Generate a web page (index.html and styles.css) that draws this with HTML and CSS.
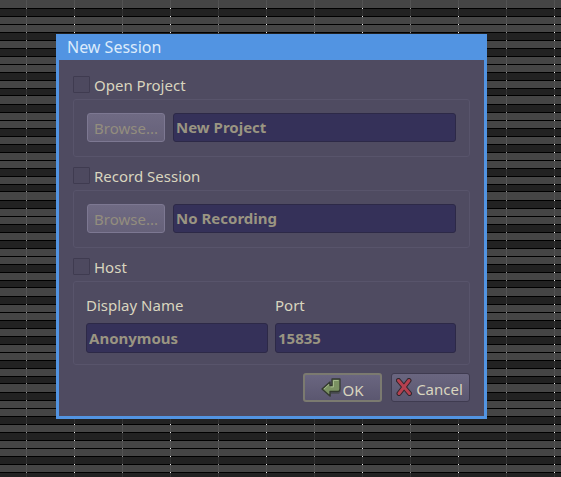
FILE: index.html
```html
<!DOCTYPE html>
<html lang="en">
<head>
<meta charset="utf-8">
<title>New Session</title>
<link rel="stylesheet" href="styles.css">
</head>
<body>
<div class="dialog">
  <div class="title-bar">New Session</div>
  <div class="content">
    <div class="section">
      <label class="check-row"><span class="check"></span>Open Project</label>
      <div class="group">
        <button class="browse">Browse...</button>
        <input class="field" type="text" value="New Project" readonly>
      </div>
    </div>
    <div class="section">
      <label class="check-row"><span class="check"></span>Record Session</label>
      <div class="group">
        <button class="browse">Browse...</button>
        <input class="field" type="text" value="No Recording" readonly>
      </div>
    </div>
    <div class="section">
      <label class="check-row"><span class="check"></span>Host</label>
      <div class="group host-group">
        <div class="host-col name-col">
          <span class="host-label">Display Name</span>
          <input class="field" type="text" value="Anonymous" readonly>
        </div>
        <div class="host-col port-col">
          <span class="host-label">Port</span>
          <input class="field" type="text" value="15835" readonly>
        </div>
      </div>
    </div>
    <div class="footer">
      <button class="action default">
        <svg width="21" height="20" viewBox="0 0 21 20">
          <path d="M3 13 L10 19 L10 16 L18 16 L20 13 Z" fill="#3e4340" opacity="0.55"/>
          <path d="M1 11 L9 4 L9 7.500 L11 7.500 L11 1 L19 1 L19 11 Q19 13.500 16.500 13.500 L9 13.500 L9 18 Z" fill="#7a9162" stroke="#33392f" stroke-width="1.300" stroke-linejoin="round"/>
          <path d="M3 11 L8 6.500 M9.500 9 L12.500 9 L12.500 2.500 L17.500 2.500" fill="none" stroke="#a3b98a" stroke-width="1"/>
        </svg>
        <span>OK</span>
      </button>
      <button class="action cancel">
        <svg width="16" height="18" viewBox="0 0 16 18">
          <path d="M2.500 2.500 L13.500 15.500 M13 2.500 L3 15.500" fill="none" stroke="#2f262c" stroke-width="5" stroke-linecap="round"/>
          <path d="M2.500 2.500 L13.500 15.500 M13 2.500 L3 15.500" fill="none" stroke="#b5404f" stroke-width="3" stroke-linecap="round"/>
        </svg>
        <span>Cancel</span>
      </button>
    </div>
  </div>
</div>
</body>
</html>
```

FILE: styles.css
```css
* {
  box-sizing: border-box;
}
html, body {
  height: 100%;
}
body {
  margin: 0;
  padding: 34px 0 0 56px;
  overflow: hidden;
  font-family: "Noto Sans", "Open Sans", sans-serif;
  background-color: #000;
  background-image:
    repeating-linear-gradient(to right, transparent 0 26px, rgba(255,255,255,0.07) 26px 27px, transparent 27px 48px),
    linear-gradient(to bottom,
      #454545 0 8px, transparent 8px 9px, #222 9px 16px, transparent 16px 17px,
      #454545 17px 24px, transparent 24px 25px, #454545 25px 32px, transparent 32px 33px,
      #222 33px 40px, transparent 40px 41px, #454545 41px 48px, transparent 48px 49px,
      #222 49px 56px, transparent 56px 57px, #454545 57px 64px, transparent 64px 65px,
      #454545 65px 72px, transparent 72px 73px, #222 73px 80px, transparent 80px 81px,
      #454545 81px 88px, transparent 88px 89px, #222 89px 95px, transparent 95px 96px),
    repeating-linear-gradient(to right, transparent 0 26px, #8a8a8a 26px 27px, transparent 27px 74px, #e8e8e8 74px 75px, transparent 75px 96px);
  background-size: auto, 100% 96px, auto;
}
.dialog {
  width: 431px;
  height: 385px;
  background: #5294e2;
  padding: 0 3px 3px;
  display: flex;
  flex-direction: column;
}
.title-bar {
  height: 26px;
  padding: 2px 0 0 8px;
  font-size: 16px;
  line-height: 22px;
  color: #dcebfb;
}
.content {
  flex: 1;
  background: #4f4b61;
  padding: 16px 14px 0;
  color: #d9d5bf;
  font-size: 15px;
}
.section {
  margin-bottom: 10px;
}
.check-row {
  display: flex;
  align-items: center;
  gap: 4px;
  height: 17px;
  margin-bottom: 6px;
}
.check {
  width: 17px;
  height: 17px;
  border: 1px solid #3f3b50;
  background: #4d495f;
  border-radius: 1px;
}
.group {
  height: 58px;
  padding: 13px 13px 0 12px;
  border: 1px solid #58546b;
  border-radius: 3px;
  display: flex;
  align-items: flex-start;
  gap: 8px;
}
.host-group {
  height: 84px;
  gap: 7px;
}
.browse {
  width: 78px;
  height: 29px;
  flex-shrink: 0;
  margin-left: 1px;
  padding: 0;
  border: 1px solid #7d7892;
  border-radius: 3px;
  background: linear-gradient(#6f6a83, #666179);
  color: #938d7e;
  font-family: inherit;
  font-size: 15px;
}
.field {
  flex: 1;
  width: 100%;
  min-width: 0;
  height: 29px;
  padding: 0 2px 2px;
  border: 1px solid #2d2947;
  border-radius: 3px;
  background: #353159;
  color: #9a9582;
  font-family: inherit;
  font-size: 15px;
  font-weight: 700;
  outline: none;
}
.host-col {
  display: flex;
  flex-direction: column;
}
.host-col .field {
  flex: none;
  height: 30px;
  padding-bottom: 0;
}
.name-col {
  width: 182px;
}
.port-col {
  flex: 1;
}
.host-label {
  height: 28px;
  line-height: 20px;
}
.footer {
  display: flex;
  justify-content: flex-end;
  gap: 9px;
  margin-top: -2px;
}
.action {
  width: 79px;
  height: 29px;
  padding: 3px 0 0;
  border: 1px solid #3f3b50;
  border-radius: 3px;
  background: linear-gradient(#6a6680, #5b5770);
  color: #d9d5bf;
  font-family: inherit;
  font-size: 15px;
  display: flex;
  align-items: center;
  justify-content: center;
}
.action.default {
  padding-top: 5px;
  border: 2px solid #7b7a70;
}
.action.default svg {
  margin-top: -4px;
}
.action.cancel {
  gap: 4px;
  padding-right: 2px;
}
.action.cancel svg {
  margin-top: -5px;
}
```
